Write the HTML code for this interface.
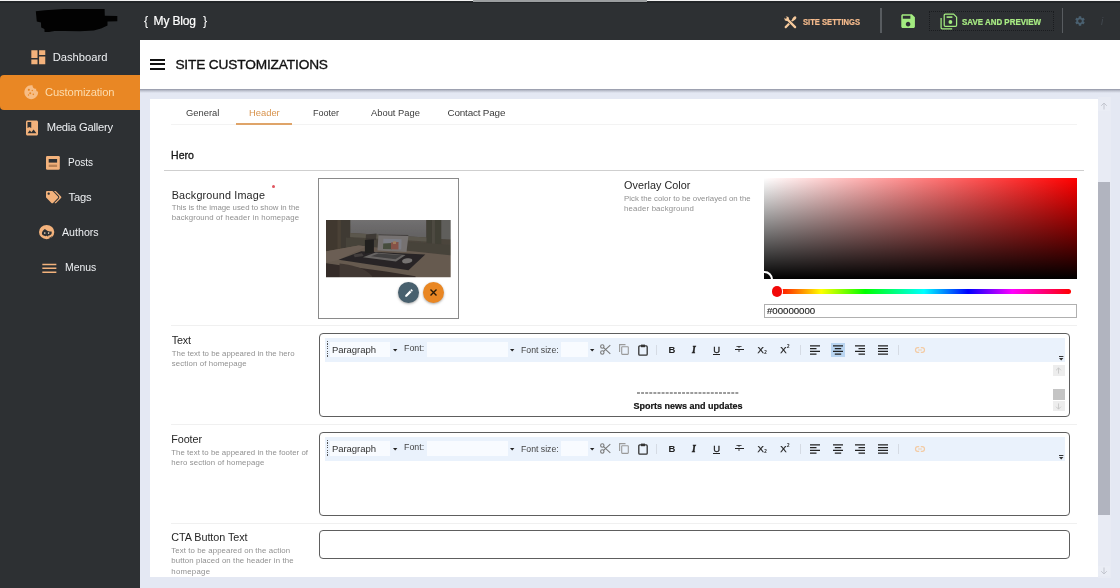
<!DOCTYPE html>
<html>
<head>
<meta charset="utf-8">
<style>
*{box-sizing:border-box;margin:0;padding:0}
html,body{width:1120px;height:588px;overflow:hidden;background:#e4e8f3;font-family:"Liberation Sans",sans-serif;}
.a{position:absolute}
.t{position:absolute;white-space:nowrap;line-height:1}
.gl{position:absolute;left:0;top:0;width:1120px;height:588px;will-change:transform}
svg{position:absolute;overflow:visible}
#topbar{left:0;top:0;width:1120px;height:40px;background:#2d3033}
#topline{left:0;top:0;width:1120px;height:1px;background:#f2f2f2}
#toptab{left:473px;top:0;width:174px;height:2px;background:#9b9ea0}
#sidebar{left:0;top:40px;width:140px;height:548px;background:#2d3033}
#active{left:0;top:75px;width:140px;height:35px;background:#e98724;border-radius:4px 0 0 4px}
#titlebar{left:140px;top:40px;width:980px;height:48.5px;background:#fff}
#tshadow{left:140px;top:88.5px;width:980px;height:4.5px;background:linear-gradient(to bottom,rgba(60,64,85,.5),rgba(60,64,85,.22) 45%,rgba(60,64,85,0))}
#panel{left:150.2px;top:99.3px;width:947.8px;height:478px;background:#fff}
#sbtrack{left:1098px;top:97px;width:12.5px;height:481px;background:#e8ebf4}
#sbthumb{left:1098px;top:182px;width:11.5px;height:333.4px;background:#b1b4bf}
.hr{position:absolute;height:1px;background:#f0f0f0}
.ed{position:absolute;left:318.5px;width:751.5px;border:1.15px solid #5e5e5e;border-radius:4px;background:#fff}
.tb{position:absolute;left:325.3px;width:739.5px;height:23.5px;background:#eaf2fc}
.sel{position:absolute;height:15px;background:#f8fbff}
.vdiv{position:absolute;width:1.5px;background:#585c60}
</style>
</head>
<body>
<div class="a" id="topbar"></div>
<div class="a" id="sidebar"></div>
<div class="a" style="left:0;top:1px;width:1120px;height:1.6px;background:#222528"></div>
<div class="a" id="topline"></div>
<div class="a" id="toptab"></div>
<div class="a" id="active"></div>
<div class="a" id="tshadow"></div>
<div class="a" id="titlebar"></div>
<div class="a" id="panel"></div>
<div class="a" id="sbtrack"></div>
<div class="a" id="sbthumb"></div>
<div class="a" style="left:1098px;top:99.8px;width:11.5px;height:11.2px;background:#eaedf5"></div>
<div class="a" style="left:1098px;top:565.7px;width:11.5px;height:10.8px;background:#eaedf5"></div>

<!-- top bar bits -->
<div class="vdiv" style="left:880px;top:8px;height:25px"></div>
<div class="vdiv" style="left:1061.7px;top:8px;height:25px"></div>
<div class="a" style="left:929px;top:11px;width:125px;height:19.5px;border:1px dotted #1a1c1f"></div>

<!-- hamburger -->
<div class="a" style="left:149.5px;top:59.2px;width:15.8px;height:2px;background:#111"></div>
<div class="a" style="left:149.5px;top:63.3px;width:15.8px;height:2px;background:#111"></div>
<div class="a" style="left:149.5px;top:67.6px;width:15.8px;height:2px;background:#111"></div>

<!-- tabs -->
<div class="hr" style="left:171px;top:123.5px;width:906px;background:#f3f3f3"></div>
<div class="a" style="left:236px;top:122.8px;width:56px;height:2px;background:#dfa469"></div>
<!-- hero line -->
<div class="hr" style="left:164px;top:170px;width:920px;background:#cfcfcf"></div>
<!-- row separators -->
<div class="hr" style="left:171px;top:325px;width:906px"></div>
<div class="hr" style="left:171px;top:424px;width:906px"></div>
<div class="hr" style="left:171px;top:523px;width:906px"></div>

<!-- required star -->
<div class="a" style="left:271.5px;top:184.6px;width:3px;height:3px;border-radius:50%;background:#e0555f"></div>

<!-- image box -->
<div class="a" style="left:318px;top:178px;width:141px;height:140.5px;border:1px solid #8a8a8a;background:#fff"></div>
<svg style="left:326.200px;top:219.500px" width="124.700" height="57.200" viewBox="0 0 124.700 57.200">
<defs><filter id="bl" x="-5%" y="-5%" width="110%" height="110%"><feGaussianBlur stdDeviation="0.650"/><feColorMatrix type="saturate" values="0.720"/></filter><clipPath id="pc"><rect width="124.700" height="57.200"/></clipPath>
<linearGradient id="wg" x1="0" y1="0" x2="0" y2="1"><stop offset="0" stop-color="#807f7d"/><stop offset="1" stop-color="#6f6e6b"/></linearGradient></defs>
<g clip-path="url(#pc)"><g filter="url(#bl)">
<rect x="-3" y="-3" width="131" height="64" fill="#544e3b"/>
<!-- window bright -->
<polygon points="24.200,0 100.400,0 100.400,17.600 24.200,12.900" fill="url(#wg)"/>
<polygon points="115.200,0 126,0 126,19.400 115.200,19" fill="#6c6a64"/>
<!-- frames -->
<polygon points="14.700,0 24.200,0 24.200,26 14.700,30" fill="#464031"/>
<polygon points="100.400,0 115.200,0 115.200,34 100.400,32" fill="#4a4636"/>
<polygon points="106,0 109,0 109,33 106,32.500" fill="#565240"/>
<polygon points="24.200,12.900 100.400,17.600 100.400,21.500 24.200,17" fill="#68624e"/>
<polygon points="20,17.500 126,25 126,36 20,27" fill="#514b39"/>
<!-- left wall -->
<polygon points="-2,-2 13.600,-2 13.600,30 -2,33" fill="#4a3e2c"/>
<polygon points="11.500,-2 14.700,-2 14.700,29.500 11.500,30.500" fill="#544833"/>
<!-- desk -->
<polygon points="-2,31.700 32.600,25.500 60,28.500 126,35.400 126,60 88,60 -2,43" fill="#776550"/>
<polygon points="-2,31.700 32.600,25.500 40,26.400 12,40 -2,43" fill="#7d6b54"/>
<!-- under desk -->
<polygon points="-2,43 60,51.500 89.500,56.300 90,60 -2,60" fill="#3a2f27"/>
<path d="M13.500,43.500 C25,45 38,47 46,56 L46,60 L13.500,60Z" fill="#4c3e30"/>
<!-- mat -->
<polygon points="12.600,39.800 35.300,31.300 99.300,34.400 82.500,50.200" fill="#2b2826"/>
<!-- laptop screen -->
<polygon points="52.500,14.200 82.500,15 80.500,32 51.500,30.500" fill="#86827c"/>
<polygon points="52.500,14.200 82.500,15 82.400,16 52.400,15.200" fill="#4a4742"/>
<polygon points="57.400,18.800 75.600,19.300 75.200,29.600 57,29" fill="#8b8f99"/>
<polygon points="57.200,23.500 66,23 66,29.300 57,29" fill="#4b583b"/>
<polygon points="65,22.500 72.500,22 72.500,29.500 65,29.300" fill="#a5563a"/>
<polygon points="67,21.500 70,21.300 70,24 67,24" fill="#c08a4a"/>
<!-- keyboard -->
<polygon points="37,37.300 49.600,32.500 79.600,34.900 70,41.500" fill="#76736d"/>
<polygon points="45,36.300 52.500,33.500 76,35.300 69.500,39.300" fill="#4a4845"/>
<!-- pens + holder -->
<polygon points="40,14.500 50.500,13.500 50,20 39.500,21" fill="#3b362e" opacity=".75"/>
<polygon points="38.900,20 47.900,19.300 47.900,32.600 38.900,33.400" fill="#24211f"/>
<!-- phone -->
<polygon points="27.300,34.400 36,33.300 37.600,36 28.800,37.300" fill="#4c4440"/>
<!-- mouse -->
<ellipse cx="81.200" cy="40.800" rx="5.100" ry="2.500" fill="#86837e" transform="rotate(-8 81.200 40.800)"/>
</g><rect width="124.700" height="57.200" fill="#1d1822" opacity=".14"/></g>
</svg>


<!-- colour picker -->
<div class="a" style="left:764px;top:178px;width:313px;height:101px;overflow:hidden;background:linear-gradient(to top,#000,rgba(0,0,0,0)),linear-gradient(to right,#fff,#f00)">
  <div class="a" style="left:-8.5px;top:92.5px;width:17px;height:17px;border:2px solid #fff;border-radius:50%"></div>
</div>
<div class="a" style="left:777px;top:288.6px;width:293.5px;height:5.6px;border-radius:3px;background:linear-gradient(to right,#f00 0%,#ff0 15%,#0f0 30%,#0ff 50%,#00f 65%,#f0f 80%,#f00 100%)"></div>
<div class="a" style="left:771.6px;top:285.9px;width:10.9px;height:10.9px;border-radius:50%;background:#f20808;box-shadow:0 0 0 1px #fff"></div>
<div class="a" style="left:764px;top:304.3px;width:313px;height:13.7px;border:1px solid #b0b0b0;background:#fff"></div>

<!-- editors -->
<div class="ed" style="top:332.7px;height:84.2px"></div>
<div class="ed" style="top:431.7px;height:84.2px"></div>
<div class="ed" style="top:530.2px;height:28.6px"></div>
<div class="a" style="left:0;top:0px;width:1120px;height:470px;will-change:transform">
<div class="tb" style="top:338.200px"></div>
<div class="a" style="left:327px;top:340.700px;width:1.300px;height:17px;background:repeating-linear-gradient(to bottom,#555 0,#555 1.300px,transparent 1.300px,transparent 2.400px)"></div>
<div class="sel" style="left:329.700px;top:342px;width:60.500px"></div>
<div class="sel" style="left:427px;top:342px;width:81px"></div>
<div class="sel" style="left:561.400px;top:342px;width:27px"></div>
<svg style="left:393.400px;top:348.700px" width="4.400" height="2.600" viewBox="0 0 4.400 2.600"><path d="M0 0h4.400L2.200 2.600z" fill="#222"/></svg>
<svg style="left:509.700px;top:348.700px" width="4.400" height="2.600" viewBox="0 0 4.400 2.600"><path d="M0 0h4.400L2.200 2.600z" fill="#222"/></svg>
<svg style="left:589.500px;top:348.700px" width="4.400" height="2.600" viewBox="0 0 4.400 2.600"><path d="M0 0h4.400L2.200 2.600z" fill="#222"/></svg>
<!-- scissors -->
<svg style="left:600.300px;top:344.200px" width="11" height="11" viewBox="0 0 11 11" fill="none" stroke="#7a7a7a" stroke-width="1.100"><circle cx="2.300" cy="8.500" r="1.700"/><circle cx="2.300" cy="2.500" r="1.700"/><path d="M3.600 3.600 L10.300 9.800 M3.600 7.400 L10.300 1.200"/></svg>
<!-- copy -->
<svg style="left:618.700px;top:344.200px" width="10" height="11" viewBox="0 0 10 11" fill="none" stroke="#9a9a9a" stroke-width="1.100"><path d="M0.600 8 V0.600 H6.500"/><rect x="2.700" y="2.700" width="6.600" height="7.700" rx=".6"/></svg>
<!-- paste -->
<svg style="left:637.700px;top:343.700px" width="10" height="12" viewBox="0 0 10 12" fill="none" stroke="#333" stroke-width="1.300"><rect x=".8" y="1.900" width="8.400" height="9.300" rx="1"/><rect x="3" y=".6" width="4" height="2.600" fill="#333" stroke="none"/></svg>
<div class="a" style="left:656.200px;top:345px;width:1px;height:10px;background:#d5dbe4"></div>
<div class="a" style="left:799.600px;top:345px;width:1px;height:10px;background:#d5dbe4"></div>
<div class="a" style="left:898px;top:345px;width:1px;height:10px;background:#d5dbe4"></div>
<!-- B I U S -->
<div class="t" style="left:668.400px;top:345.300px;font-size:9.500px;font-weight:bold;color:#222">B</div>
<div class="t" style="left:692px;top:345.800px;font-size:9.500px;font-weight:bold;font-style:italic;color:#222;font-family:'Liberation Serif',serif;-webkit-text-stroke:.45px #222">I</div>
<div class="t" style="left:713.300px;top:345px;font-size:9.500px;color:#222;-webkit-text-stroke:.3px #222">U</div>
<div class="a" style="left:713px;top:354.300px;width:7.400px;height:1.100px;background:#222"></div>
<div class="t" style="left:736.300px;top:345.300px;font-size:9px;color:#222">T</div>
<div class="a" style="left:734.600px;top:349.200px;width:9px;height:1.200px;background:#222"></div>
<div class="a" style="left:735.800px;top:349.200px;width:6.600px;height:1.200px;background:#e9f1fb;top:348.100px;height:1.100px"></div>
<div class="t" style="left:757.500px;top:345.300px;font-size:9.500px;color:#222;-webkit-text-stroke:.25px #222">X</div>
<div class="t" style="left:764.300px;top:351.300px;font-size:4.500px;font-weight:bold;color:#222">2</div>
<div class="t" style="left:780.300px;top:345.300px;font-size:9.500px;color:#222;-webkit-text-stroke:.25px #222">X</div>
<div class="t" style="left:787.100px;top:344.500px;font-size:4.500px;font-weight:bold;color:#222">2</div>
<!-- align -->
<!--HL--><div class="a" style="left:830.500px;top:342.500px;width:14.800px;height:14.200px;background:#b9d5f1"></div><!--/HL-->
<svg style="left:810.300px;top:344.700px" width="10" height="10" viewBox="0 0 10 10" stroke="#222" stroke-width="1.200"><path d="M0 .8H10M0 3.600H6.500M0 6.400H10M0 9.200H6.500"/></svg>
<svg style="left:832.800px;top:344.700px" width="10" height="10" viewBox="0 0 10 10" stroke="#222" stroke-width="1.200"><path d="M0 .8H10M1.800 3.600H8.200M0 6.400H10M1.800 9.200H8.200"/></svg>
<svg style="left:855.300px;top:344.700px" width="10" height="10" viewBox="0 0 10 10" stroke="#222" stroke-width="1.200"><path d="M0 .8H10M3.500 3.600H10M0 6.400H10M3.500 9.200H10"/></svg>
<svg style="left:877.500px;top:344.700px" width="10" height="10" viewBox="0 0 10 10" stroke="#222" stroke-width="1.200"><path d="M0 .8H10M0 3.600H10M0 6.400H10M0 9.200H10"/></svg>
<!-- link -->
<svg style="left:914.700px;top:346.700px" width="10" height="6" viewBox="0 0 10 6" fill="none" stroke="#f3cba4" stroke-width="1.200"><path d="M4.200 .7H2.800a2.300 2.300 0 0 0 0 4.600H4.200M5.800 .7H7.200a2.300 2.300 0 0 1 0 4.600H5.800M3.200 3H6.800"/></svg>
<!-- toolbar overflow -->
<svg style="left:1058.500px;top:355.600px" width="4.400" height="4.600" viewBox="0 0 4.400 4.600"><path d="M0 0h4.400v.9H0zM0 2h4.400L2.200 4.600z" fill="#333"/></svg>
</div>

<div class="a" style="left:0;top:99px;width:1120px;height:470px;will-change:transform">
<div class="tb" style="top:338.200px"></div>
<div class="a" style="left:327px;top:340.700px;width:1.300px;height:17px;background:repeating-linear-gradient(to bottom,#555 0,#555 1.300px,transparent 1.300px,transparent 2.400px)"></div>
<div class="sel" style="left:329.700px;top:342px;width:60.500px"></div>
<div class="sel" style="left:427px;top:342px;width:81px"></div>
<div class="sel" style="left:561.400px;top:342px;width:27px"></div>
<svg style="left:393.400px;top:348.700px" width="4.400" height="2.600" viewBox="0 0 4.400 2.600"><path d="M0 0h4.400L2.200 2.600z" fill="#222"/></svg>
<svg style="left:509.700px;top:348.700px" width="4.400" height="2.600" viewBox="0 0 4.400 2.600"><path d="M0 0h4.400L2.200 2.600z" fill="#222"/></svg>
<svg style="left:589.500px;top:348.700px" width="4.400" height="2.600" viewBox="0 0 4.400 2.600"><path d="M0 0h4.400L2.200 2.600z" fill="#222"/></svg>
<!-- scissors -->
<svg style="left:600.300px;top:344.200px" width="11" height="11" viewBox="0 0 11 11" fill="none" stroke="#7a7a7a" stroke-width="1.100"><circle cx="2.300" cy="8.500" r="1.700"/><circle cx="2.300" cy="2.500" r="1.700"/><path d="M3.600 3.600 L10.300 9.800 M3.600 7.400 L10.300 1.200"/></svg>
<!-- copy -->
<svg style="left:618.700px;top:344.200px" width="10" height="11" viewBox="0 0 10 11" fill="none" stroke="#9a9a9a" stroke-width="1.100"><path d="M0.600 8 V0.600 H6.500"/><rect x="2.700" y="2.700" width="6.600" height="7.700" rx=".6"/></svg>
<!-- paste -->
<svg style="left:637.700px;top:343.700px" width="10" height="12" viewBox="0 0 10 12" fill="none" stroke="#333" stroke-width="1.300"><rect x=".8" y="1.900" width="8.400" height="9.300" rx="1"/><rect x="3" y=".6" width="4" height="2.600" fill="#333" stroke="none"/></svg>
<div class="a" style="left:656.200px;top:345px;width:1px;height:10px;background:#d5dbe4"></div>
<div class="a" style="left:799.600px;top:345px;width:1px;height:10px;background:#d5dbe4"></div>
<div class="a" style="left:898px;top:345px;width:1px;height:10px;background:#d5dbe4"></div>
<!-- B I U S -->
<div class="t" style="left:668.400px;top:345.300px;font-size:9.500px;font-weight:bold;color:#222">B</div>
<div class="t" style="left:692px;top:345.800px;font-size:9.500px;font-weight:bold;font-style:italic;color:#222;font-family:'Liberation Serif',serif;-webkit-text-stroke:.45px #222">I</div>
<div class="t" style="left:713.300px;top:345px;font-size:9.500px;color:#222;-webkit-text-stroke:.3px #222">U</div>
<div class="a" style="left:713px;top:354.300px;width:7.400px;height:1.100px;background:#222"></div>
<div class="t" style="left:736.300px;top:345.300px;font-size:9px;color:#222">T</div>
<div class="a" style="left:734.600px;top:349.200px;width:9px;height:1.200px;background:#222"></div>
<div class="a" style="left:735.800px;top:349.200px;width:6.600px;height:1.200px;background:#e9f1fb;top:348.100px;height:1.100px"></div>
<div class="t" style="left:757.500px;top:345.300px;font-size:9.500px;color:#222;-webkit-text-stroke:.25px #222">X</div>
<div class="t" style="left:764.300px;top:351.300px;font-size:4.500px;font-weight:bold;color:#222">2</div>
<div class="t" style="left:780.300px;top:345.300px;font-size:9.500px;color:#222;-webkit-text-stroke:.25px #222">X</div>
<div class="t" style="left:787.100px;top:344.500px;font-size:4.500px;font-weight:bold;color:#222">2</div>
<!-- align -->

<svg style="left:810.300px;top:344.700px" width="10" height="10" viewBox="0 0 10 10" stroke="#222" stroke-width="1.200"><path d="M0 .8H10M0 3.600H6.500M0 6.400H10M0 9.200H6.500"/></svg>
<svg style="left:832.800px;top:344.700px" width="10" height="10" viewBox="0 0 10 10" stroke="#222" stroke-width="1.200"><path d="M0 .8H10M1.800 3.600H8.200M0 6.400H10M1.800 9.200H8.200"/></svg>
<svg style="left:855.300px;top:344.700px" width="10" height="10" viewBox="0 0 10 10" stroke="#222" stroke-width="1.200"><path d="M0 .8H10M3.500 3.600H10M0 6.400H10M3.500 9.200H10"/></svg>
<svg style="left:877.500px;top:344.700px" width="10" height="10" viewBox="0 0 10 10" stroke="#222" stroke-width="1.200"><path d="M0 .8H10M0 3.600H10M0 6.400H10M0 9.200H10"/></svg>
<!-- link -->
<svg style="left:914.700px;top:346.700px" width="10" height="6" viewBox="0 0 10 6" fill="none" stroke="#f3cba4" stroke-width="1.200"><path d="M4.200 .7H2.800a2.300 2.300 0 0 0 0 4.600H4.200M5.800 .7H7.200a2.300 2.300 0 0 1 0 4.600H5.800M3.200 3H6.800"/></svg>
<!-- toolbar overflow -->
<svg style="left:1058.500px;top:355.600px" width="4.400" height="4.600" viewBox="0 0 4.400 4.600"><path d="M0 0h4.400v.9H0zM0 2h4.400L2.200 4.600z" fill="#333"/></svg>
</div>


<!-- editor 1 content -->
<svg style="left:637.4px;top:392px" width="102" height="2" viewBox="0 0 102 2"><path d="M0 .95H101.3" stroke="#3a3a3a" stroke-width="1.1" stroke-dasharray="2.95 1.15"/></svg>
<!-- inner scrollbar -->
<div class="a" style="left:1053px;top:365px;width:11.6px;height:10.7px;background:#ededed"></div>
<div class="a" style="left:1053px;top:389px;width:11.6px;height:10.9px;background:#c4c4c4"></div>
<div class="a" style="left:1053px;top:400.6px;width:11.6px;height:10.8px;background:#ededed"></div>

<!-- redacted logo blob -->
<svg style="left:0;top:0" width="140" height="40" viewBox="0 0 140 40">
<path d="M35.800 11.300 L45 10.200 L64 9.100 L104.600 9.100 L104.800 15.700 L117.300 15.900 L117.300 21.200 L107.500 21.500 L107.500 25.600 L101 28.500 L93.800 30.500 L80 31.200 L64 31 L54.500 31 L49 32 L44.600 32 L44.400 29 L41.200 27.500 L41 22.500 L36.800 21.600 Z" fill="#020202"/>
</svg>
<!-- sidebar icons -->
<svg style="left:28.7px;top:48.4px" width="18.6" height="18.6" viewBox="0 0 24 24" fill="#f3b27c"><path d="M3 13h8V3H3v10zm0 8h8v-6H3v6zm10 0h8V11h-8v10zm0-18v6h8V3h-8z"/></svg>
<svg style="left:22.5px;top:83.7px" width="16.5" height="16.5" viewBox="0 0 24 24"><path fill="#f7bd85" d="M21.95 10.99c-1.79-.03-3.7-1.95-2.68-4.22-2.98 1-5.77-1.59-5.19-4.56C6.95.71 2 6.580 2 12c0 5.520 4.480 10 10 10 5.890 0 10.540-5.080 9.950-11.010z"/><g fill="#e98724"><circle cx="8.500" cy="8.500" r="1.500"/><circle cx="10.500" cy="13.500" r="1.500"/><circle cx="15" cy="15" r="1.200"/><circle cx="8" cy="16" r="1"/><circle cx="13.500" cy="9.500" r="1"/></g></svg>
<svg style="left:23px;top:118.500px" width="18" height="18" viewBox="0 0 24 24" fill="#f3b27c"><path d="M18 2H6c-1.100 0-2 .9-2 2v16c0 1.100.9 2 2 2h12c1.100 0 2-.9 2-2V4c0-1.100-.9-2-2-2zM6 4h5v8l-2.500-1.500L6 12V4zm0 15l3-3.860 2.140 2.580 3-3.860L18 19H6z"/></svg>
<!-- posts -->
<svg style="left:45.6px;top:155.6px" width="14" height="14" viewBox="0 0 14 14"><rect x="0" y="0" width="13.800" height="13.800" rx="1.200" fill="#f3b27c"/><rect x="2.700" y="3" width="8.400" height="3.600" fill="#2d3033"/><rect x="2.700" y="8.600" width="8.400" height="2.400" fill="#b88256"/></svg>
<!-- tags -->
<svg style="left:45.8px;top:191.300px" width="15.360" height="12.290" viewBox="0 0 640 512" fill="#f3b27c"><path d="M497.941 225.941L286.059 14.059A48 48 0 0 0 252.118 0H48C21.490 0 0 21.490 0 48v204.118a48 48 0 0 0 14.059 33.941l211.882 211.882c18.744 18.745 49.136 18.746 67.882 0l204.118-204.118c18.745-18.745 18.745-49.137 0-67.882zM112 160c-26.510 0-48-21.490-48-48s21.490-48 48-48 48 21.490 48 48-21.490 48-48 48zm513.941 133.823L421.823 497.941c-18.745 18.745-49.137 18.745-67.882 0l-.36-.36L527.640 323.522c16.999-16.999 26.360-39.600 26.360-63.640s-9.362-46.641-26.360-63.640L331.397 0h48.721a48 48 0 0 1 33.941 14.059l211.882 211.882c18.745 18.745 18.745 49.137 0 67.882z"/></svg>
<!-- authors -->
<svg style="left:38.900px;top:225.300px" width="15.300" height="14.400" viewBox="0 0 15.300 14.400">
<ellipse cx="7.650" cy="7.100" rx="7.650" ry="7.100" fill="#f3b27c"/>
<path d="M2.900 8.300 C3 6.400 4.600 4.700 5.900 3.900 C7.400 5.600 10 6.500 12.600 6.500 C13.200 9.600 11.500 11.400 8.600 11.400 C8.300 10.600 7.400 10.400 6.900 11.200 C4.500 11 2.800 10 2.900 8.300Z" fill="#2d3033"/>
<path d="M9 11.300 C10.800 11.200 12 10.600 12.700 9.600" stroke="#f3b27c" stroke-width="1.100" fill="none"/>
<circle cx="5.800" cy="8.100" r=".8" fill="#f6dcc0"/><circle cx="9.600" cy="8.100" r=".8" fill="#f6dcc0"/>
<path d="M10.300 13.200 C11.300 12.800 12 12.300 12.600 11.600" stroke="#2d3033" stroke-width=".9" fill="none"/>
</svg>
<!-- menus -->
<svg style="left:40px;top:258.600px" width="18.700" height="18.700" viewBox="0 0 24 24" fill="#f3b27c"><path d="M3 18h18v-2H3v2zm0-5h18v-2H3v2zm0-7v2h18V6H3z"/></svg>

<!-- top: tools -->
<svg style="left:784px;top:15.700px" width="12.500" height="12.500" viewBox="0 0 12.500 12.500" fill="none" stroke-linecap="round">
<path d="M1.700 11.100 L5.300 7.500" stroke="#f5c99c" stroke-width="2.200"/>
<path d="M7.600 5.200 L9.200 3.600" stroke="#f5c99c" stroke-width="1.500"/>
<ellipse cx="10.300" cy="2.500" rx="2.500" ry="1.500" transform="rotate(-45 10.300 2.500)" fill="#f5c99c"/>
<path d="M3 3 L11 11" stroke="#2d3033" stroke-width="3.600" stroke-linecap="butt"/>
<path d="M3.400 3.400 L11.100 11.100" stroke="#f5c99c" stroke-width="2.300"/>
<circle cx="2.700" cy="2.700" r="2.300" fill="#f5c99c"/>
<path d="M2.400 2.400 L0.200 0.200" stroke="#2d3033" stroke-width="1.500" stroke-linecap="butt"/>
</svg>
<!-- save -->
<svg style="left:899.300px;top:11.800px" width="18.200" height="18.200" viewBox="0 0 24 24" fill="#a3eb80"><path d="M17 3H5c-1.110 0-2 .9-2 2v14c0 1.100.890 2 2 2h14c1.100 0 2-.9 2-2V7l-4-4zm-5 16c-1.660 0-3-1.340-3-3s1.340-3 3-3 3 1.340 3 3-1.340 3-3 3zm3-10H5V5h10v4z"/></svg>
<!-- save & preview -->
<svg style="left:939.500px;top:12.500px" width="18" height="17" viewBox="0 0 18 17" fill="none" stroke="#a3eb80" stroke-width="1.250" stroke-linejoin="round">
<path d="M1.100 5 V14.800 Q1.100 15.900 2.200 15.900 H12.200"/>
<path d="M5.300 1.100 H13.600 L16.600 4.100 V12.200 Q16.600 13.300 15.500 13.300 H5.300 Q4.200 13.300 4.200 12.200 V2.200 Q4.200 1.100 5.300 1.100Z"/>
<rect x="6.600" y="3.300" width="5.800" height="1.600" fill="#a3eb80" stroke="none"/>
<circle cx="10.400" cy="9" r="1.900" fill="#a3eb80" stroke="none"/>
</svg>
<!-- gear -->
<svg style="left:1074.400px;top:14.700px" width="12" height="12" viewBox="0 0 24 24" fill="#4a6070"><path d="M19.140 12.940c.040-.3.060-.610.060-.940 0-.320-.020-.640-.070-.940l2.030-1.580c.180-.140.230-.410.120-.610l-1.920-3.320c-.120-.220-.370-.290-.590-.220l-2.390.960c-.5-.380-1.030-.7-1.620-.940l-.360-2.540c-.040-.240-.240-.410-.480-.410h-3.840c-.240 0-.430.170-.470.410l-.360 2.540c-.590.240-1.130.570-1.620.940l-2.390-.960c-.220-.080-.470 0-.590.220L2.740 8.870c-.120.210-.08.470.12.610l2.030 1.580c-.050.300-.090.630-.090.940s.020.640.070.940l-2.030 1.580c-.180.140-.230.410-.12.610l1.920 3.320c.12.220.370.290.590.220l2.390-.960c.5.380 1.030.7 1.620.940l.360 2.540c.050.240.240.410.480.410h3.840c.240 0 .440-.170.470-.410l.360-2.540c.590-.240 1.130-.560 1.620-.940l2.390.960c.220.080.470 0 .590-.220l1.920-3.320c.12-.220.070-.470-.12-.610l-2.010-1.580zM12 15.600c-1.980 0-3.600-1.620-3.600-3.600s1.620-3.600 3.600-3.600 3.600 1.620 3.600 3.600-1.620 3.600-3.600 3.600z"/></svg>

<!-- round buttons -->
<div class="a" style="left:398px;top:282.400px;width:21px;height:21px;border-radius:50%;background:#48606e;box-shadow:0 1px 2.500px rgba(0,0,0,.35)"></div>
<div class="a" style="left:422.800px;top:282.400px;width:21px;height:21px;border-radius:50%;background:#e98724;box-shadow:0 1px 2.500px rgba(0,0,0,.35)"></div>
<svg style="left:403.500px;top:287.900px" width="10" height="10" viewBox="0 0 24 24" fill="#fff"><path d="M3 17.250V21h3.750L17.810 9.940l-3.750-3.750L3 17.250zM20.710 7.040c.390-.390.390-1.020 0-1.410l-2.340-2.340c-.390-.390-1.020-.390-1.410 0l-1.830 1.830 3.750 3.750 1.830-1.830z"/></svg>
<svg style="left:429.800px;top:289.400px" width="7" height="7" viewBox="0 0 7 7" stroke="#2a1a08" stroke-width="1.400" fill="none"><path d="M0.500 0.500 L6.500 6.500 M6.500 0.500 L0.500 6.500"/></svg>

<!-- scroll arrows (outer) -->
<svg style="left:1099.800px;top:101.500px" width="8" height="8" viewBox="0 0 8 8" stroke="#c3c6cf" stroke-width="1" fill="none"><path d="M4 7.500V1M1.200 3.800L4 1l2.800 2.800"/></svg>
<svg style="left:1099.800px;top:567px" width="8" height="8" viewBox="0 0 8 8" stroke="#c3c6cf" stroke-width="1" fill="none"><path d="M4 .5V7M1.200 4.200L4 7l2.800-2.800"/></svg>
<!-- inner scroll arrows -->
<svg style="left:1055.300px;top:366.800px" width="7" height="7" viewBox="0 0 8 8" stroke="#c9c9c9" stroke-width="1.100" fill="none"><path d="M4 7.500V1M1.200 3.800L4 1l2.800 2.800"/></svg>
<svg style="left:1055.300px;top:402.600px" width="7" height="7" viewBox="0 0 8 8" stroke="#c9c9c9" stroke-width="1.100" fill="none"><path d="M4 .5V7M1.200 4.200L4 7l2.800-2.800"/></svg>

<div class="gl">
<div class="t" id="t0" style="left:144.0px;top:14.62px;font-size:12.5px;color:#fff;">{</div>
<div class="t" id="t1" style="left:153.6px;top:15.04px;font-size:12px;color:#fff;letter-spacing:-0.160px;-webkit-text-stroke:.2px #fff;">My Blog</div>
<div class="t" id="t2" style="left:203.0px;top:14.62px;font-size:12.5px;color:#fff;">}</div>
<div class="t" id="t3" style="left:52.7px;top:52.32px;font-size:11.2px;color:#eef0f3;letter-spacing:0.008px;">Dashboard</div>
<div class="t" id="t4" style="left:45.0px;top:87.32px;font-size:11.2px;color:#fcdcae;letter-spacing:-0.108px;">Customization</div>
<div class="t" id="t5" style="left:46.8px;top:122.32px;font-size:11.2px;color:#eef0f3;letter-spacing:-0.235px;">Media Gallery</div>
<div class="t" id="t6" style="left:67.5px;top:157.32px;font-size:11.2px;color:#eef0f3;transform:scaleX(0.8934);transform-origin:0 0;">Posts</div>
<div class="t" id="t7" style="left:68.6px;top:192.32px;font-size:11.2px;color:#eef0f3;letter-spacing:-0.180px;">Tags</div>
<div class="t" id="t8" style="left:61.8px;top:227.32px;font-size:11.2px;color:#eef0f3;transform:scaleX(0.9517);transform-origin:0 0;">Authors</div>
<div class="t" id="t9" style="left:64.5px;top:262.32px;font-size:11.2px;color:#eef0f3;transform:scaleX(0.9317);transform-origin:0 0;">Menus</div>
<div class="t" id="t10" style="left:175.4px;top:57.50px;font-size:13.7px;color:#111;letter-spacing:-0.155px;-webkit-text-stroke:.35px #111;">SITE CUSTOMIZATIONS</div>
<div class="t" id="t11" style="left:185.7px;top:108.02px;font-size:9.9px;color:#3a3a3a;transform:scaleX(0.9476);transform-origin:0 0;">General</div>
<div class="t" id="t12" style="left:248.6px;top:108.02px;font-size:9.9px;color:#d8934c;transform:scaleX(0.9478);transform-origin:0 0;">Header</div>
<div class="t" id="t13" style="left:312.5px;top:108.02px;font-size:9.9px;color:#3a3a3a;transform:scaleX(0.9143);transform-origin:0 0;">Footer</div>
<div class="t" id="t14" style="left:370.7px;top:108.02px;font-size:9.9px;color:#3a3a3a;transform:scaleX(0.9472);transform-origin:0 0;">About Page</div>
<div class="t" id="t15" style="left:447.5px;top:108.02px;font-size:9.9px;color:#3a3a3a;letter-spacing:-0.177px;">Contact Page</div>
<div class="t" id="t16" style="left:171.4px;top:149.99px;font-size:11px;color:#1a1a1a;transform:scaleX(0.9604);transform-origin:0 0;-webkit-text-stroke:.35px #1a1a1a;">Hero</div>
<div class="t" id="t17" style="left:171.7px;top:189.66px;font-size:10.8px;color:#262626;letter-spacing:0.177px;">Background Image</div>
<div class="t" id="t18" style="left:624.1px;top:180.16px;font-size:10.8px;color:#262626;letter-spacing:0.017px;">Overlay Color</div>
<div class="t" id="t19" style="left:171.8px;top:334.66px;font-size:10.8px;color:#262626;letter-spacing:-0.171px;">Text</div>
<div class="t" id="t20" style="left:171.3px;top:433.86px;font-size:10.8px;color:#262626;letter-spacing:-0.104px;">Footer</div>
<div class="t" id="t21" style="left:171.3px;top:532.46px;font-size:10.8px;color:#262626;letter-spacing:-0.052px;">CTA Button Text</div>
<div class="t" id="t22" style="left:171.7px;top:204.40px;font-size:7.8px;color:#909090;letter-spacing:-0.011px;">This is the image used to show in the</div>
<div class="t" id="t23" style="left:171.7px;top:214.30px;font-size:7.8px;color:#909090;letter-spacing:0.135px;">background of header in homepage</div>
<div class="t" id="t24" style="left:624.1px;top:194.70px;font-size:7.8px;color:#909090;letter-spacing:0.013px;">Pick the color to be overlayed on the</div>
<div class="t" id="t25" style="left:624.1px;top:204.60px;font-size:7.8px;color:#909090;letter-spacing:0.156px;">header background</div>
<div class="t" id="t26" style="left:171.8px;top:349.60px;font-size:7.8px;color:#909090;letter-spacing:0.029px;">The text to be appeared in the hero</div>
<div class="t" id="t27" style="left:171.8px;top:359.50px;font-size:7.8px;color:#909090;letter-spacing:0.128px;">section of homepage</div>
<div class="t" id="t28" style="left:171.3px;top:448.50px;font-size:7.8px;color:#909090;letter-spacing:0.048px;">The text to be appeared in the footer of</div>
<div class="t" id="t29" style="left:171.3px;top:458.80px;font-size:7.8px;color:#909090;letter-spacing:0.123px;">hero section of homepage</div>
<div class="t" id="t30" style="left:171.3px;top:547.10px;font-size:7.8px;color:#909090;letter-spacing:0.092px;">Text to be appeared on the action</div>
<div class="t" id="t31" style="left:171.3px;top:557.30px;font-size:7.8px;color:#909090;letter-spacing:0.116px;">button placed on the header in the</div>
<div class="t" id="t32" style="left:171.3px;top:567.80px;font-size:7.8px;color:#909090;letter-spacing:0.263px;">homepage</div>
<div class="t" id="t33" style="left:767.0px;top:305.69px;font-size:9.7px;color:#262626;letter-spacing:-0.037px;-webkit-text-stroke:.15px #262626;">#00000000</div>
<div class="t" id="t34" style="left:633.6px;top:401.58px;font-size:9px;color:#111;font-weight:bold;letter-spacing:-0.001px;-webkit-text-stroke:.2px #111;">Sports news and updates</div>
<div class="t" id="t35" style="left:802.6px;top:17.82px;font-size:8.6px;color:#f6bb8d;font-weight:bold;transform:scaleX(0.8857);transform-origin:0 0;-webkit-text-stroke:.2px #f6bb8d;">SITE SETTINGS</div>
<div class="t" id="t36" style="left:962.0px;top:17.72px;font-size:8.6px;color:#a8ec84;font-weight:bold;transform:scaleX(0.9241);transform-origin:0 0;-webkit-text-stroke:.2px #a8ec84;">SAVE AND PREVIEW</div>
<div class="t" id="t37" style="left:1101.0px;top:16.54px;font-size:10px;color:#434950;font-style:italic;font-family:"Liberation Serif",serif;">i</div>
<div class="t" id="t38" style="left:331.9px;top:344.76px;font-size:9.5px;color:#333;letter-spacing:-0.034px;">Paragraph</div>
<div class="t" id="t39" style="left:403.9px;top:342.96px;font-size:9.5px;color:#444;transform:scaleX(0.9281);transform-origin:0 0;">Font:</div>
<div class="t" id="t40" style="left:520.5px;top:344.76px;font-size:9.5px;color:#444;transform:scaleX(0.9153);transform-origin:0 0;">Font size:</div>
<div class="t" id="t41" style="left:331.9px;top:443.76px;font-size:9.5px;color:#333;letter-spacing:-0.034px;">Paragraph</div>
<div class="t" id="t42" style="left:403.9px;top:441.96px;font-size:9.5px;color:#444;transform:scaleX(0.9281);transform-origin:0 0;">Font:</div>
<div class="t" id="t43" style="left:520.5px;top:443.76px;font-size:9.5px;color:#444;transform:scaleX(0.9153);transform-origin:0 0;">Font size:</div>
</div>
</body>
</html>
